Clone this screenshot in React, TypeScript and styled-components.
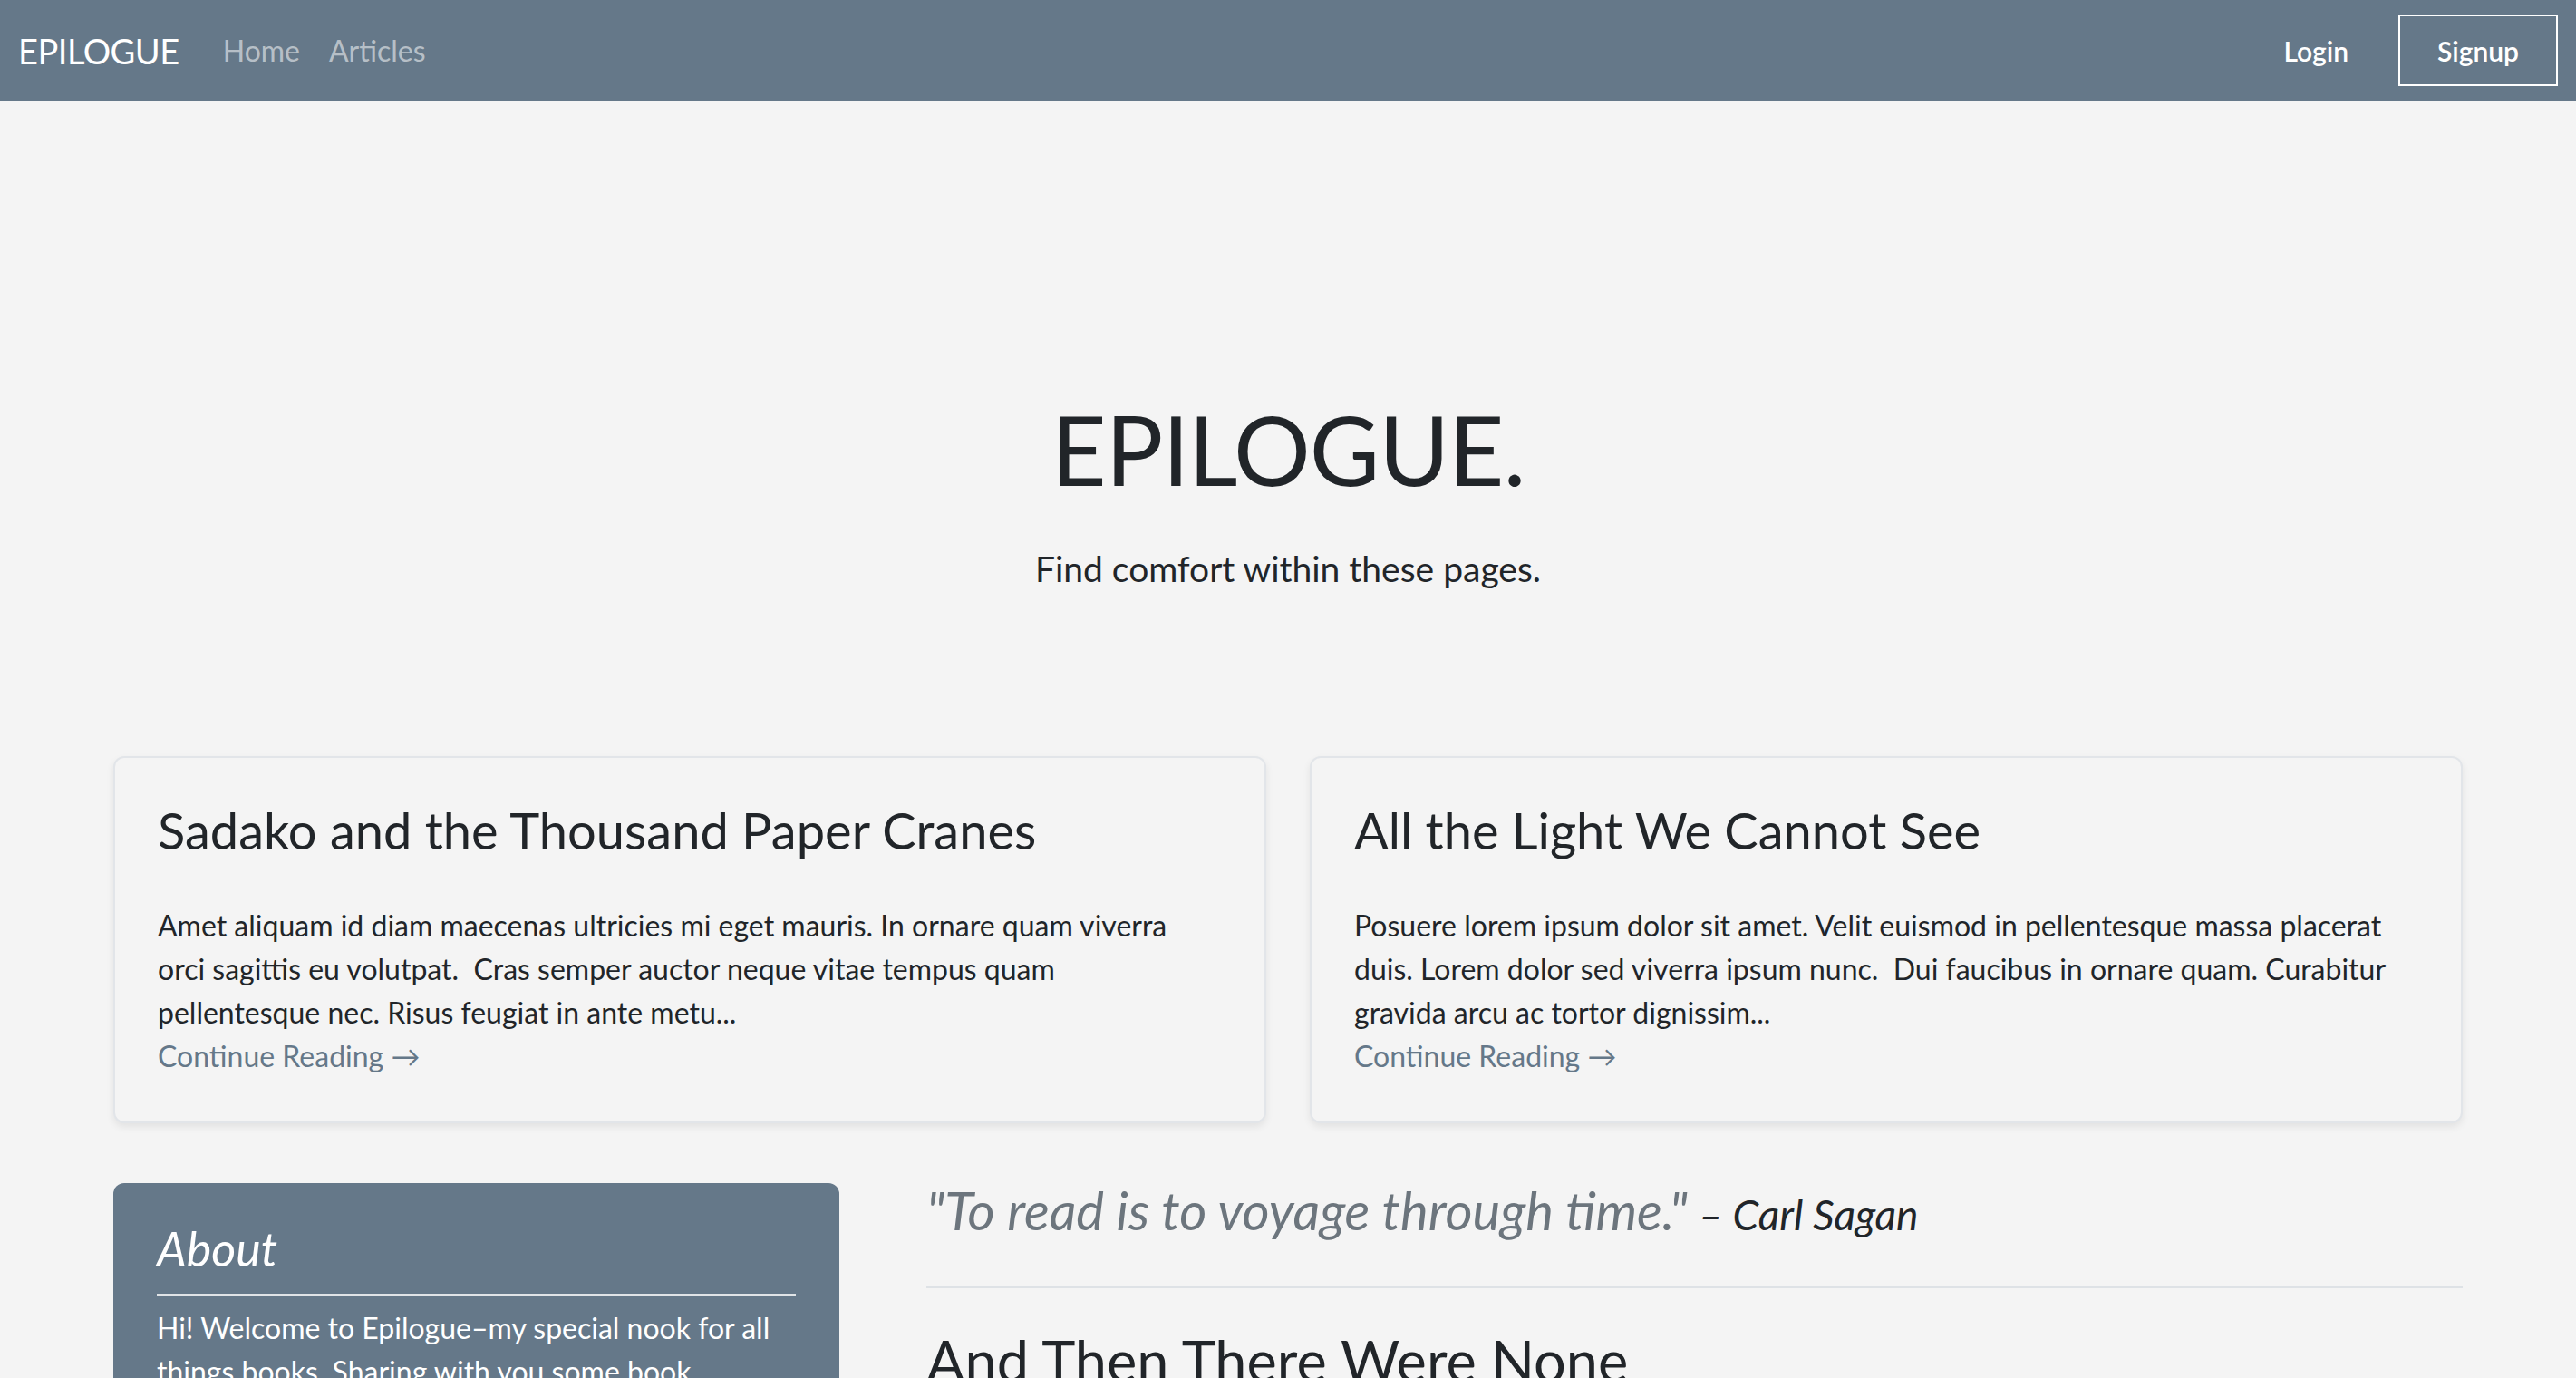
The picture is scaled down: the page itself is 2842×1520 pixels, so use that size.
import React from "react";
import styled, { createGlobalStyle } from "styled-components";

const GlobalStyle = createGlobalStyle`
  html, body { margin: 0; padding: 0; }
  body {
    background: #f4f4f4;
    color: #212529;
    font-family: Lato, "Open Sans", sans-serif;
  }
  * { box-sizing: border-box; }
`;

const SLATE = "#657889";

const Navbar = styled.nav`
  height: 111px;
  background: ${SLATE};
  display: flex;
  align-items: center;
  padding: 0 20px 0 20px;
`;

const Brand = styled.a`
  font-size: 38px;
  color: #fff;
  text-decoration: none;
  margin-right: 32px;
  letter-spacing: -0.5px;
`;

const NavLink = styled.a`
  font-size: 32px;
  color: rgba(255, 255, 255, 0.55);
  text-decoration: none;
  padding: 0 16px;
`;

const NavRight = styled.div`
  margin-left: auto;
  display: flex;
  align-items: center;
  gap: 55px;
`;

const AuthLink = styled.a`
  font-size: 30px;
  font-weight: 600;
  color: #fff;
  text-decoration: none;
`;

const SignupButton = styled.a`
  height: 79px;
  padding: 0 41px;
  border: 2px solid #fff;
  display: flex;
  align-items: center;
  font-size: 30px;
  font-weight: 600;
  color: #fff;
  text-decoration: none;
`;

const Hero = styled.header`
  padding: 321px 0 177px;
  text-align: center;
`;

const HeroTitle = styled.h1`
  margin: 0 0 38px;
  font-size: 106px;
  font-weight: 400;
  line-height: 1.2;
  letter-spacing: -1px;
`;

const HeroLead = styled.p`
  margin: 0;
  font-size: 39px;
  line-height: 60px;
`;

const Container = styled.main`
  max-width: 2640px;
  margin: 0 auto;
  padding: 0 24px;
`;

const CardGrid = styled.section`
  display: grid;
  grid-template-columns: 1fr 1fr;
  gap: 48px;
`;

const Card = styled.article`
  background: #f4f4f4;
  border: 2px solid #e2e5e9;
  border-radius: 12px;
  box-shadow: 0 4px 8px rgba(0, 0, 0, 0.075);
  padding: 46px 56px 48px 47px;
`;

const CardTitle = styled.h3`
  margin: 0 0 48px;
  font-size: 56px;
  font-weight: 400;
  line-height: 1.2;
  white-space: nowrap;
`;

const CardText = styled.p`
  margin: 0;
  font-size: 32px;
  line-height: 48px;
`;

const ReadMore = styled.a`
  display: block;
  font-size: 32px;
  line-height: 48px;
  color: ${SLATE};
  text-decoration: none;
`;

const Lower = styled.section`
  margin-top: 61px;
  display: grid;
  grid-template-columns: 801px 1fr;
  gap: 96px;
  align-items: start;
`;

const Sidebar = styled.aside`
  margin-top: 5px;
  background: ${SLATE};
  color: #fff;
  border-radius: 12px;
  padding: 41px 48px 48px;
`;

const SideTitle = styled.h4`
  margin: 0 0 18px;
  font-size: 52px;
  font-weight: 400;
  font-style: italic;
  line-height: 1.2;
`;

const SideRule = styled.hr`
  margin: 0 0 12px;
  border: 0;
  height: 2px;
  background: rgba(255, 255, 255, 0.8);
`;

const SideText = styled.p`
  margin: 0;
  font-size: 32px;
  line-height: 48px;
`;

const Feed = styled.div`
  display: flex;
  flex-direction: column;
`;

const Quote = styled.blockquote`
  margin: 0;
  font-size: 58px;
  line-height: 1.2;
  font-style: italic;
  color: #6c757d;
`;

const Cite = styled.cite`
  font-size: 46px;
  color: #212529;
  margin-left: 12px;
`;

const FeedRule = styled.hr`
  margin: 49px 0 42px;
  border: 0;
  height: 2px;
  background: #dee2e6;
`;

const PostTitle = styled.h2`
  margin: 0 0 32px;
  font-size: 63px;
  font-weight: 400;
  line-height: 1.2;
`;

const posts = [
  {
    title: "Sadako and the Thousand Paper Cranes",
    text:
      "Amet aliquam id diam maecenas ultricies mi eget mauris. In ornare quam viverra orci sagittis eu volutpat.\u00a0 Cras semper auctor neque vitae tempus quam pellentesque nec. Risus feugiat in ante metu...",
  },
  {
    title: "All the Light We Cannot See",
    text:
      "Posuere lorem ipsum dolor sit amet. Velit euismod in pellentesque massa placerat duis. Lorem dolor sed viverra ipsum nunc.\u00a0 Dui faucibus in ornare quam. Curabitur gravida arcu ac tortor dignissim...",
  },
];

export default function App() {
  return (
    <>
      <GlobalStyle />
      <Navbar>
        <Brand href="#">EPILOGUE</Brand>
        <NavLink href="#">Home</NavLink>
        <NavLink href="#">Articles</NavLink>
        <NavRight>
          <AuthLink href="#">Login</AuthLink>
          <SignupButton href="#">Signup</SignupButton>
        </NavRight>
      </Navbar>
      <Hero>
        <HeroTitle>EPILOGUE.</HeroTitle>
        <HeroLead>Find comfort within these pages.</HeroLead>
      </Hero>
      <Container>
        <CardGrid>
          {posts.map((p) => (
            <Card key={p.title}>
              <CardTitle>{p.title}</CardTitle>
              <CardText>{p.text}</CardText>
              <ReadMore href="#">Continue Reading →</ReadMore>
            </Card>
          ))}
        </CardGrid>
        <Lower>
          <Sidebar>
            <SideTitle>About</SideTitle>
            <SideRule />
            <SideText>
              Hi! Welcome to Epilogue–my special nook for all things books. Sharing with you some book
              recommendations, reviews and the stories that stayed with me long after the last page.
            </SideText>
          </Sidebar>
          <Feed>
            <Quote>
              "To read is to voyage through time."<Cite>– Carl Sagan</Cite>
            </Quote>
            <FeedRule />
            <PostTitle>And Then There Were None</PostTitle>
            <CardText>
              Tellus in metus vulputate eu scelerisque felis imperdiet proin. Egestas sed tempus urna et
              pharetra pharetra massa massa ultricies...
            </CardText>
            <ReadMore href="#">Continue Reading →</ReadMore>
          </Feed>
        </Lower>
      </Container>
    </>
  );
}
